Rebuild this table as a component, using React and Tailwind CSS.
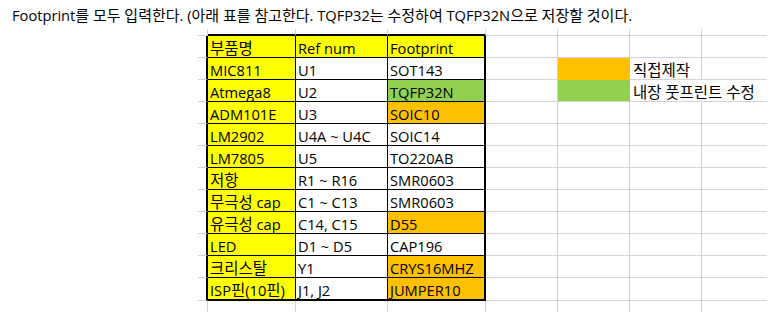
const YELLOW = 'bg-[#ffff00]';
const ORANGE = 'bg-[#ffc000]';
const GREEN = 'bg-[#92d050]';

const parts = [
  { name: '부품명', ref: 'Ref num', fp: 'Footprint', fill: YELLOW },
  { name: 'MIC811', ref: 'U1', fp: 'SOT143' },
  { name: 'Atmega8', ref: 'U2', fp: 'TQFP32N', fill: GREEN },
  { name: 'ADM101E', ref: 'U3', fp: 'SOIC10', fill: ORANGE },
  { name: 'LM2902', ref: 'U4A ~ U4C', fp: 'SOIC14' },
  { name: 'LM7805', ref: 'U5', fp: 'TO220AB' },
  { name: '저항', ref: 'R1 ~ R16', fp: 'SMR0603' },
  { name: '무극성 cap', ref: 'C1 ~ C13', fp: 'SMR0603' },
  { name: '유극성 cap', ref: 'C14, C15', fp: 'D55', fill: ORANGE },
  { name: 'LED', ref: 'D1 ~ D5', fp: 'CAP196' },
  { name: '크리스탈', ref: 'Y1', fp: 'CRYS16MHZ', fill: ORANGE },
  { name: 'ISP핀(10핀)', ref: 'J1, J2', fp: 'JUMPER10', fill: ORANGE },
];

const legend = {
  1: { fill: ORANGE, label: '직접제작' },
  2: { fill: GREEN, label: '내장 풋프린트 수정', overflow: true },
};

const cx = (...c) => c.filter(Boolean).join(' ');

// Hangul runs get a slightly larger size so they sit like Malgun Gothic
const ko = (s, size = 'text-[15.5px]') => (
  <span>
    {s.split(/([\uac00-\ud7a3]+)/).map((part, i) =>
      /[\uac00-\ud7a3]/.test(part) ? <span key={i} className={size}>{part}</span> : part
    )}
  </span>
);

const text = 'flex items-end whitespace-nowrap pl-[2px] leading-[18px]';
const grid = 'border-[#d4d4d4]';

function TopRow() {
  return (
    <>
      <div />
      <div className={cx('border-r border-b', grid)} />
      <div className="border-r border-r-[#d4d4d4] border-b-2 border-b-black" />
      <div className="border-r border-r-[#d4d4d4] border-b-2 border-b-black" />
      <div className="border-r border-r-[#d4d4d4] border-b-2 border-b-black" />
      <div className={cx('border-r border-b', grid)} />
      <div className={cx('border-r border-b', grid)} />
      <div className={cx('border-r border-b', grid)} />
      <div className={cx('border-b', grid)} />
    </>
  );
}

function PartRow({ p, i, last }) {
  const lg = legend[i];
  const bottom = last ? 'border-b-2' : 'border-b';
  return (
    <>
      <div />
      <div className="border-r-2 border-r-black border-b border-b-[#d4d4d4]" />
      <div className={cx(text, YELLOW, 'border-r border-black', bottom)}>{ko(p.name)}</div>
      <div className={cx(text, p.fill === YELLOW ? YELLOW : 'bg-white', 'border-r border-black', bottom)}>{p.ref}</div>
      <div className={cx(text, p.fill || 'bg-white', 'border-r-2 border-black', bottom)}>{p.fp}</div>
      <div className={cx('border-r border-b', grid)} />
      <div className={cx(lg ? lg.fill : '', lg ? 'border-r border-r-transparent' : 'border-r border-r-[#d4d4d4]', i === 1 ? 'border-b border-b-transparent' : 'border-b border-b-[#d4d4d4]')} />
      <div className={cx(text, 'pl-[3px] border-b', grid, lg && lg.overflow ? 'border-r border-r-transparent' : 'border-r')}>
        {lg ? ko(lg.label) : null}
      </div>
      <div className={cx('border-b', grid)} />
    </>
  );
}

function BottomRow() {
  return (
    <>
      <div />
      <div className={cx('border-r', grid)} />
      <div className={cx('border-r', grid)} />
      <div className={cx('border-r', grid)} />
      <div className={cx('border-r', grid)} />
      <div className={cx('border-r', grid)} />
      <div className={cx('border-r', grid)} />
      <div className={cx('border-r', grid)} />
      <div />
    </>
  );
}

export default function App() {
  return (
    <div className="w-[774px] h-[312px] overflow-hidden bg-white text-black text-[14.67px] font-['Open_Sans','Noto_Sans_CJK_KR',sans-serif]">
      <div className="h-[29px] pl-[12px] pt-[6px] leading-[18px] whitespace-nowrap">
        {ko('Footprint를 모두 입력한다. (아래 표를 참고한다. TQFP32는 수정하여 TQFP32N으로 저장할 것이다.', 'text-[15px]')}
      </div>
      <div className="grid grid-cols-[198px_10px_88px_92px_98px_72px_72px_72px_65px] grid-rows-[7px_repeat(11,22px)_23px_11px]">
        <TopRow />
        {parts.map((p, i) => (
          <PartRow key={i} p={p} i={i} last={i === parts.length - 1} />
        ))}
        <BottomRow />
      </div>
    </div>
  );
}
